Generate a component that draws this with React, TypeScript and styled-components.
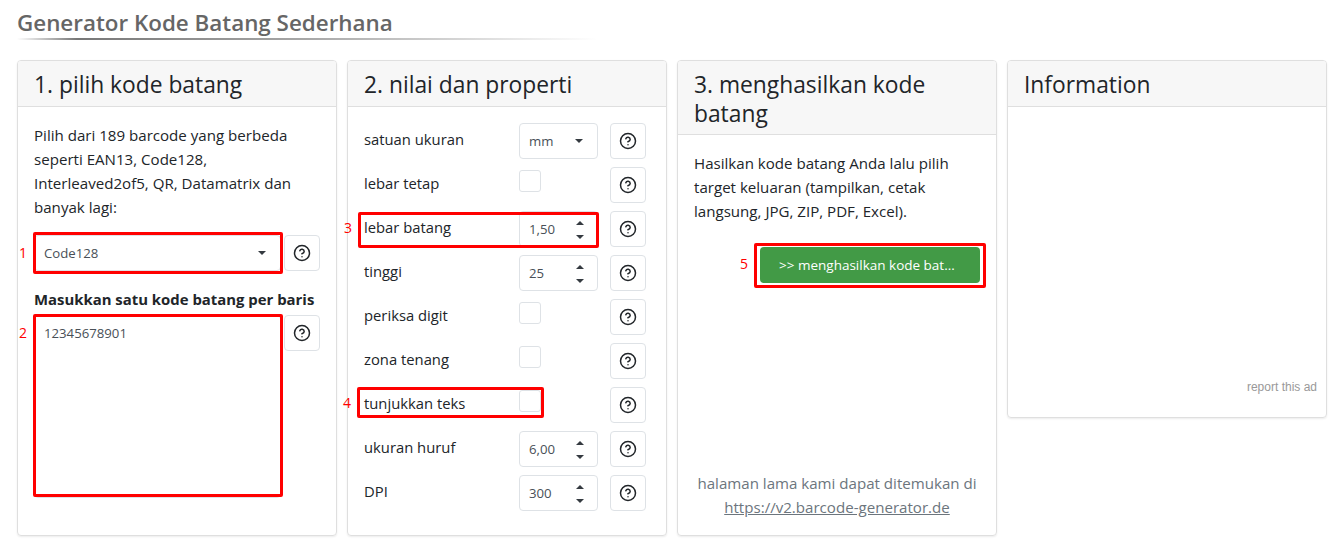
import React from "react";
import styled, { createGlobalStyle } from "styled-components";
import { CircleHelp } from "lucide-react";

const GlobalStyle = createGlobalStyle`
    html, body {
        margin: 0;
        padding: 0;
        background: #fff;
    }
    body {
        font-family: "Open Sans", "Noto Sans", sans-serif;
        font-size: 15.1px;
        line-height: 24px;
        color: #212529;
    }
    * {
        box-sizing: border-box;
    }
`;

const Page = styled.div`
    width: 1343px;
    height: 547px;
    padding: 8px 16px 0 17px;
    overflow: hidden;
`;

const Title = styled.h1`
    margin: 0;
    height: 32px;
    font-size: 22.4px;
    line-height: 29px;
    font-weight: 600;
    color: #666;
    background: linear-gradient(to right, #fff 0, #777 60px, #aaa 300px, #fff 580px) no-repeat 0 30px / 580px 2px;
`;

const Columns = styled.div`
    display: flex;
    align-items: flex-start;
    gap: 10px;
    margin-top: 20px;
`;

const Card = styled.section<{ $height: number }>`
    display: flex;
    flex-direction: column;
    width: 320px;
    height: ${(p) => p.$height}px;
    border: 1px solid #dfdfdf;
    border-radius: 4px;
    box-shadow: 0 1px 2px rgba(0, 0, 0, 0.08);
`;

const CardHeader = styled.h2`
    margin: 0;
    padding: 10px 16px 6px;
    font-size: 22.8px;
    line-height: 28.6px;
    font-weight: 400;
    background: #f7f7f7;
    border-bottom: 1px solid #dfdfdf;
    border-radius: 3px 3px 0 0;
`;

const CardBody = styled.div`
    position: relative;
    flex: 1;
    display: flex;
    flex-direction: column;
    padding: 16px;
`;

const Text = styled.p`
    margin: 0;
`;

const FieldRow = styled.div<{ $top: number }>`
    display: flex;
    align-items: flex-start;
    justify-content: space-between;
    margin-top: ${(p) => p.$top}px;
`;

const HelpButton = styled.button`
    display: flex;
    align-items: center;
    justify-content: center;
    width: 36px;
    height: 36px;
    padding: 0;
    flex: none;
    background: #fff;
    color: #212529;
    border: 1px solid #dee2e6;
    border-radius: 4px;
`;

const Control = styled.div<{ $width: number }>`
    position: relative;
    display: flex;
    align-items: center;
    width: ${(p) => p.$width}px;
    height: 36px;
    padding: 0 9px;
    font-size: 13.2px;
    color: #495057;
    background: #fff;
    border: 1px solid #dee2e6;
    border-radius: 4px;
`;

const Caret = styled.span<{ $up?: boolean }>`
    width: 0;
    height: 0;
    border-left: 4px solid transparent;
    border-right: 4px solid transparent;
    border-top: ${(p) => (p.$up ? "0" : "4px solid #343a40")};
    border-bottom: ${(p) => (p.$up ? "4px solid #343a40" : "0")};
`;

const SelectCaret = styled(Caret)`
    position: absolute;
    right: 14px;
    top: 15px;
`;

const Spinner = styled.span`
    position: absolute;
    right: 13px;
    top: 9px;
    display: flex;
    flex-direction: column;
    gap: 10px;
`;

const BoldLabel = styled.div`
    margin-top: 16px;
    font-weight: 700;
    font-size: 14.9px;
    white-space: nowrap;
`;

const TextArea = styled(Control)`
    align-items: flex-start;
    height: 183px;
    padding: 5px 9px;
`;

const PropertyList = styled.div`
    display: flex;
    flex-direction: column;
    gap: 8px;
`;

const PropertyRow = styled.div`
    display: flex;
    align-items: flex-start;
    height: 36px;
`;

const PropertyLabel = styled.label`
    width: 155px;
    margin-top: 4px;
    font-size: 14.8px;
`;

const ControlCell = styled.div`
    width: 91px;
`;

const Checkbox = styled.div`
    width: 22px;
    height: 22px;
    margin-top: 3px;
    background: #fff;
    border: 1px solid #dee2e6;
    border-radius: 3px;
`;

const GenerateWrap = styled.div`
    display: flex;
    justify-content: flex-end;
    margin-top: 24px;
`;

const GenerateButton = styled.button`
    display: block;
    width: 220px;
    height: 36px;
    padding: 0 24px 0 19px;
    font: inherit;
    font-size: 13.5px;
    font-weight: 500;
    color: #fff;
    text-align: left;
    white-space: nowrap;
    overflow: hidden;
    text-overflow: ellipsis;
    background: #429a46;
    border: 0;
    border-radius: 4px;
`;

const FootNote = styled.div`
    margin-top: auto;
    text-align: center;
    color: #6c757d;
`;

const FootLink = styled.a`
    display: block;
    color: #6c757d;
    text-decoration: underline;
`;

const ReportAd = styled.div`
    position: absolute;
    right: 9px;
    bottom: 22px;
    font-family: "Liberation Sans", Arial, sans-serif;
    font-size: 12px;
    line-height: 16px;
    font-weight: 400;
    color: #999;
`;

// red instruction frames drawn over the form
const Frame = styled.div<{ $l: number; $t: number; $w: number; $h: number }>`
    position: absolute;
    left: ${(p) => p.$l}px;
    top: ${(p) => p.$t}px;
    width: ${(p) => p.$w}px;
    height: ${(p) => p.$h}px;
    border: 3px solid #f00;
    border-radius: 2px;
    pointer-events: none;
`;

const FrameNumber = styled.span<{ $top: number }>`
    position: absolute;
    right: calc(100% + 9px);
    top: ${(p) => p.$top}px;
    font-size: 14px;
    line-height: 16px;
    color: #f00;
`;

const Help = () => (
    <HelpButton>
        <CircleHelp size={18} strokeWidth={2} />
    </HelpButton>
);

const Updown = () => (
    <Spinner>
        <Caret $up />
        <Caret />
    </Spinner>
);

type Prop = { label: string; kind: "select" | "check" | "number"; value?: string };

const properties: Prop[] = [
    { label: "satuan ukuran", kind: "select", value: "mm" },
    { label: "lebar tetap", kind: "check" },
    { label: "lebar batang", kind: "number", value: "1,50" },
    { label: "tinggi", kind: "number", value: "25" },
    { label: "periksa digit", kind: "check" },
    { label: "zona tenang", kind: "check" },
    { label: "tunjukkan teks", kind: "check" },
    { label: "ukuran huruf", kind: "number", value: "6,00" },
    { label: "DPI", kind: "number", value: "300" },
];

const App = () => {
    return (
        <Page>
            <GlobalStyle />
            <Title>Generator Kode Batang Sederhana</Title>
            <Columns>
                <Card $height={476}>
                    <CardHeader>1. pilih kode batang</CardHeader>
                    <CardBody>
                        <Text>
                            Pilih dari 189 barcode yang berbeda seperti EAN13, Code128,
                            Interleaved2of5, QR, Datamatrix dan banyak lagi:
                        </Text>
                        <FieldRow $top={16}>
                            <Control $width={247}>
                                Code128
                                <SelectCaret />
                            </Control>
                            <Help />
                        </FieldRow>
                        <BoldLabel>Masukkan satu kode batang per baris</BoldLabel>
                        <FieldRow $top={4}>
                            <TextArea $width={247}>12345678901</TextArea>
                            <Help />
                        </FieldRow>
                        <Frame $l={15} $t={125} $w={250} $h={42}>
                            <FrameNumber $top={10}>1</FrameNumber>
                        </Frame>
                        <Frame $l={15} $t={207} $w={250} $h={183}>
                            <FrameNumber $top={8}>2</FrameNumber>
                        </Frame>
                    </CardBody>
                </Card>
                <Card $height={476}>
                    <CardHeader>2. nilai dan properti</CardHeader>
                    <CardBody>
                        <PropertyList>
                            {properties.map((prop) => (
                                <PropertyRow key={prop.label}>
                                    <PropertyLabel>{prop.label}</PropertyLabel>
                                    <ControlCell>
                                        {prop.kind === "check" ? (
                                            <Checkbox />
                                        ) : (
                                            <Control $width={79}>
                                                {prop.value}
                                                {prop.kind === "select" ? <SelectCaret /> : <Updown />}
                                            </Control>
                                        )}
                                    </ControlCell>
                                    <Help />
                                </PropertyRow>
                            ))}
                        </PropertyList>
                        <Frame $l={10} $t={105} $w={241} $h={36}>
                            <FrameNumber $top={5}>3</FrameNumber>
                        </Frame>
                        <Frame $l={9} $t={280} $w={187} $h={31}>
                            <FrameNumber $top={5}>4</FrameNumber>
                        </Frame>
                    </CardBody>
                </Card>
                <Card $height={476}>
                    <CardHeader>3. menghasilkan kode batang</CardHeader>
                    <CardBody>
                        <Text>
                            Hasilkan kode batang Anda lalu pilih target keluaran (tampilkan,
                            cetak langsung, JPG, ZIP, PDF, Excel).
                        </Text>
                        <GenerateWrap>
                            <GenerateButton>&gt;&gt; menghasilkan kode batang</GenerateButton>
                        </GenerateWrap>
                        <FootNote>
                            halaman lama kami dapat ditemukan di
                            <FootLink>https://v2.barcode-generator.de</FootLink>
                        </FootNote>
                        <Frame $l={76} $t={108} $w={232} $h={45}>
                            <FrameNumber $top={10}>5</FrameNumber>
                        </Frame>
                    </CardBody>
                </Card>
                <Card $height={358}>
                    <CardHeader>Information</CardHeader>
                    <CardBody>
                        <ReportAd>report this ad</ReportAd>
                    </CardBody>
                </Card>
            </Columns>
        </Page>
    );
};

export default App;
